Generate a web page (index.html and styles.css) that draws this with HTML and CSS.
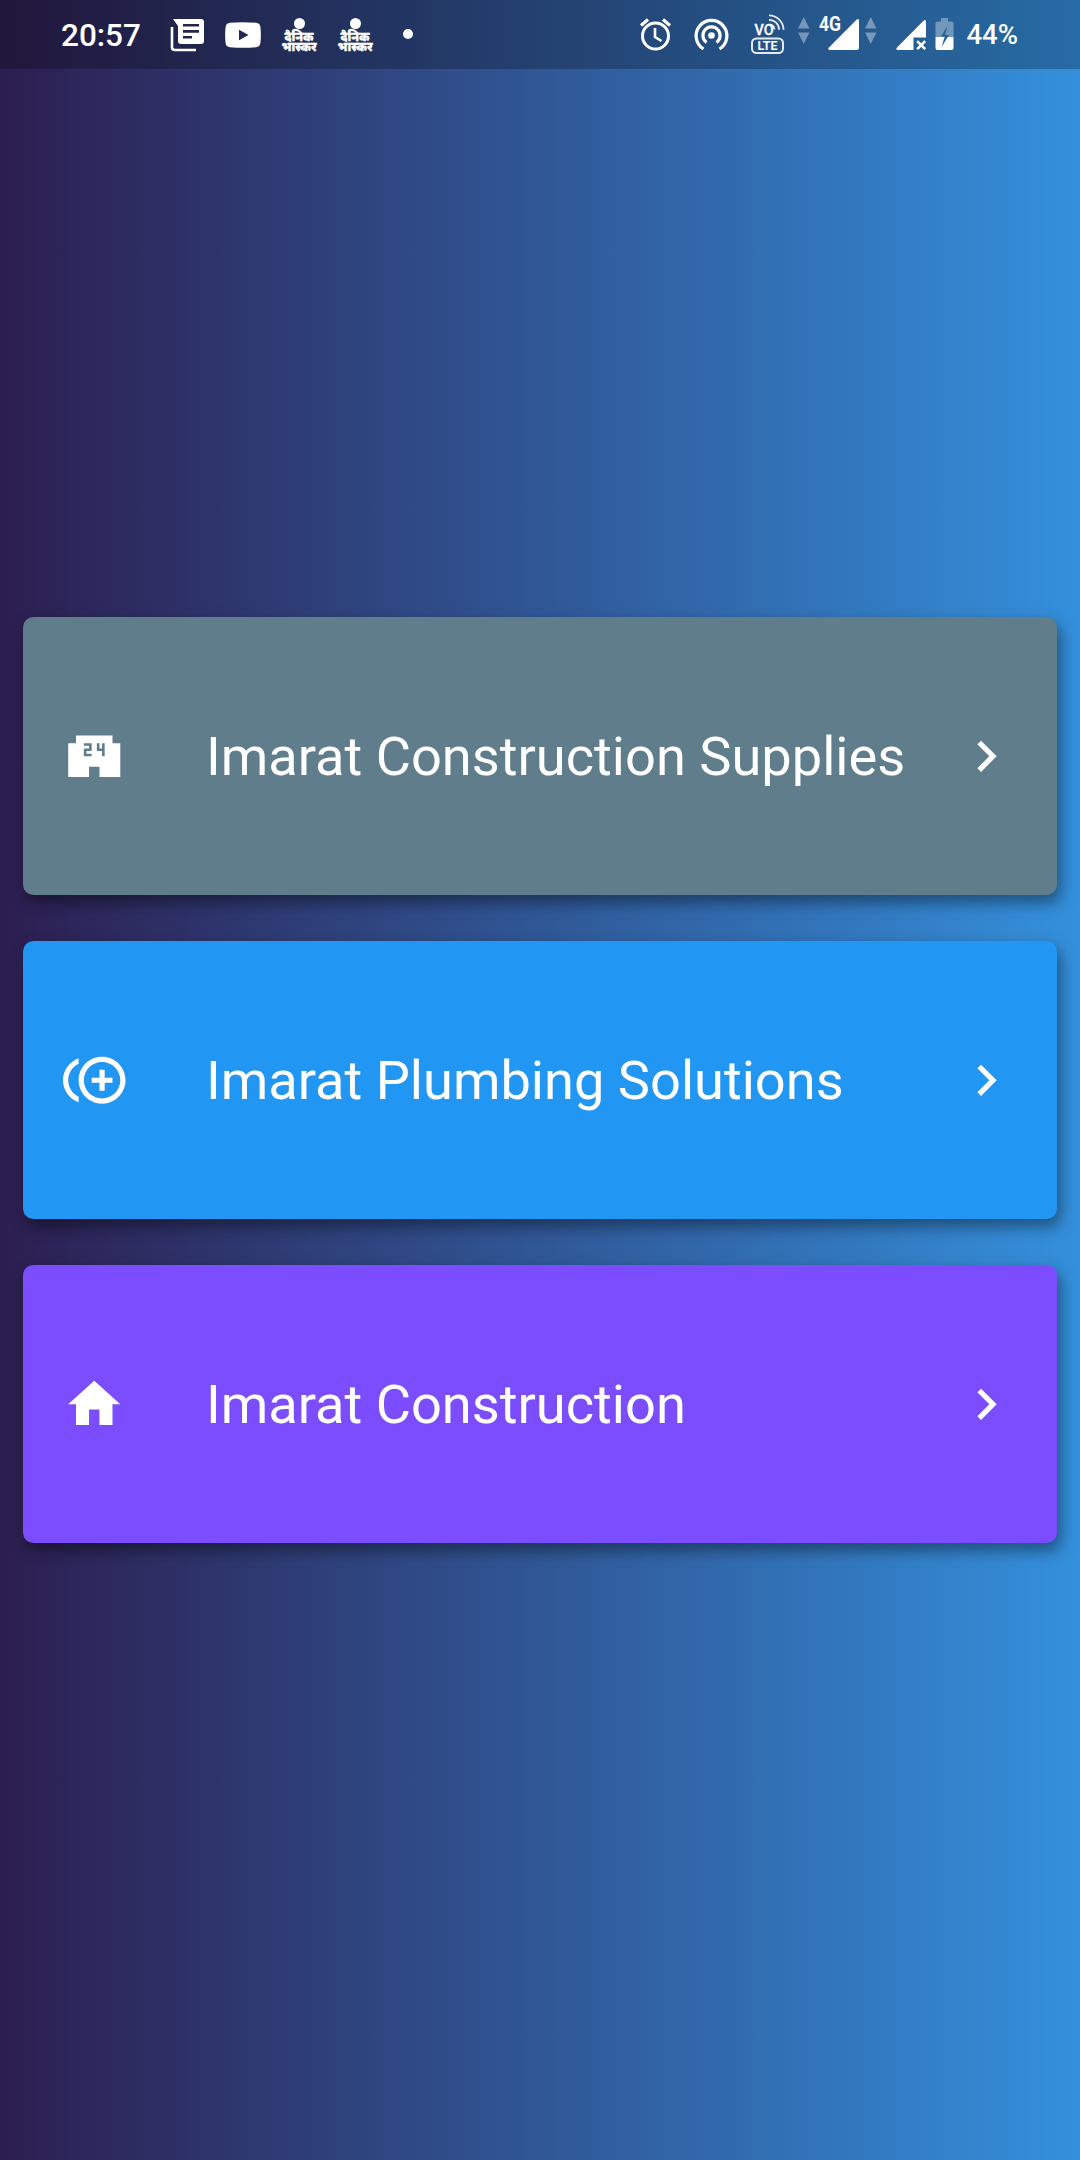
FILE: index.html
```html
<!DOCTYPE html>
<html lang="en">
<head>
<meta charset="utf-8">
<title>Imarat</title>
<link rel="stylesheet" href="styles.css">
</head>
<body>
<div class="screen">
  <header class="status">
    <div class="status-left">
      <span class="clock">20:57</span>
      <svg class="news" width="32" height="32" viewBox="0 0 32 32"><path d="M1 8v20q0 3 3 3h21" fill="none" stroke="#fff" stroke-width="2.6"/><path fill="#fff" fill-rule="evenodd" d="M2 0h28q3 0 3 3v19q0 3-3 3H10q-3 0-3-3V7zM12 5v2.6h16V5zM12 11v2.800h16V11zM12 17v2.600h9V17z"/></svg>
      <svg class="video" width="36" height="26" viewBox="0 0 36 26"><path fill="#fff" fill-rule="evenodd" d="M5 .8Q18-.5 31 .8q4 .4 4.400 4.200.9 8 0 16-.4 3.800-4.400 4.200-13 1.300-26 0Q1 24.800.6 21q-.9-8 0-16Q1 1.200 5 .8zM14 7.800v10.400L23.500 13z"/></svg>
      <span class="paper"><i class="sun"></i><b class="masthead">दैनिक<br>भास्कर</b></span>
      <span class="paper"><i class="sun"></i><b class="masthead">दैनिक<br>भास्कर</b></span>
      <i class="dot"></i>
    </div>
    <div class="status-right">
      <svg class="alarm" width="32" height="34" viewBox="0 0 32 34" fill="none" stroke="#fff"><circle cx="15.500" cy="18" r="13" stroke-width="3"/><path d="M1 7.500l7-6M30 7.500l-7-6" stroke-width="3.200"/><path d="M15 10v9l6.500 4" stroke-width="2.600"/></svg>
      <svg class="hotspot" width="36" height="34" viewBox="0 0 36 34" fill="none" stroke="#fff" stroke-width="3.200"><circle cx="17.500" cy="17.500" r="3.300" fill="#fff" stroke="none"/><path d="M12.500 24.500a8.600 8.600 0 1 1 10 0M9.500 31a15.400 15.400 0 1 1 16 0"/></svg>
      <svg class="volte" width="36" height="42" viewBox="0 0 36 42"><text x="3.500" y="22.300" class="vo" textLength="19" lengthAdjust="spacingAndGlyphs">VO</text><g fill="none" stroke="#fff" stroke-width="1.800" opacity=".88"><path d="M18.500 11.500a5.500 5.500 0 0 1 5 5M18 7a9.500 9.500 0 0 1 10 9.800M18 2.300a14.500 14.500 0 0 1 14.500 14.500"/><rect x="1" y="25.500" width="31" height="14.500" rx="4.500" stroke-width="2"/></g><text x="6.500" y="37.300" class="lte" textLength="20" lengthAdjust="spacingAndGlyphs">LTE</text></svg>
      <svg class="arrows first" width="12" height="28" viewBox="0 0 12 28"><path d="M0 11.500h11.500L5.700 0zM0 15.500h11.500L5.700 27z"/></svg>
      <svg class="signal" width="42" height="36" viewBox="0 0 42 36"><path fill="#fff" d="M11 35q-3-.5-.8-2.800L37.500 4.800Q39.500 3 40 5v28q0 2-2 2z"/><text x="0" y="16.200" class="net" textLength="22" lengthAdjust="spacingAndGlyphs">4G</text></svg>
      <svg class="arrows second" width="12" height="28" viewBox="0 0 12 28"><path d="M0 11.500h11.500L5.700 0zM0 15.500h11.500L5.700 27z"/></svg>
      <svg class="nosim" width="31" height="31" viewBox="0 0 31 31"><path fill="#fff" d="M2 30q-3-.5-.8-2.800L27.500.8Q29.500-1 30 1v16.500H17.500V30z"/><path d="M21.200 21.200l8 8m0-8l-8 8" stroke="#fff" stroke-width="2.600"/></svg>
      <svg class="battery" width="19" height="32" viewBox="0 0 19 32"><path fill="#fff" opacity=".35" d="M6 0h7v3.500h3.500q2 0 2 2V19H.5V5.500q0-2 2-2H6z"/><path fill="#fff" d="M.5 19h18v11q0 2-2 2h-14q-2 0-2-2z"/><path fill="#266196" d="M12.500 8L6 18.500h3.800L6.500 29 14 17h-4z"/></svg>
      <span class="percent">44%</span>
    </div>
  </header>
  <main class="menu">
    <a class="card supplies">
      <svg class="icon" viewBox="0 0 24 24"><path d="M19 7V4H5v3H2v13h8v-4h4v4h8V7h-3zm-8 3H9v1h2v1H8V9h2V8H8V7h3v3zm5 2h-1v-2h-2V7h1v2h1V7h1v5z"/></svg>
      <span class="label">Imarat Construction Supplies</span>
      <svg class="icon" viewBox="0 0 24 24"><path d="M10 6L8.590 7.410 13.170 12l-4.580 4.590L10 18l6-6z"/></svg>
    </a>
    <a class="card plumbing">
      <svg class="icon" viewBox="0 0 24 24"><path d="M16 8h-2v3h-3v2h3v3h2v-3h3v-2h-3zM2 12c0-2.790 1.640-5.200 4.010-6.320V3.520C2.520 4.760 0 8.090 0 12s2.520 7.240 6.010 8.480v-2.160C3.640 17.200 2 14.790 2 12zm13-9c-4.960 0-9 4.040-9 9s4.040 9 9 9 9-4.040 9-9-4.040-9-9-9zm0 16c-3.860 0-7-3.140-7-7s3.140-7 7-7 7 3.140 7 7-3.140 7-7 7z"/></svg>
      <span class="label">Imarat Plumbing Solutions</span>
      <svg class="icon" viewBox="0 0 24 24"><path d="M10 6L8.590 7.410 13.170 12l-4.580 4.590L10 18l6-6z"/></svg>
    </a>
    <a class="card construction">
      <svg class="icon" viewBox="0 0 24 24"><path d="M10 20v-6h4v6h5v-8h3L12 3 2 12h3v8z"/></svg>
      <span class="label">Imarat Construction</span>
      <svg class="icon" viewBox="0 0 24 24"><path d="M10 6L8.590 7.410 13.170 12l-4.580 4.590L10 18l6-6z"/></svg>
    </a>
  </main>
</div>
</body>
</html>
```
FILE: styles.css
```css
* { box-sizing: border-box; }
body { margin: 0; font-family: Roboto, "Noto Sans", sans-serif; color: #fff; }
svg { display: block; flex: none; overflow: visible; }

.screen {
  width: 1080px;
  height: 2160px;
  display: flex;
  flex-direction: column;
  background: linear-gradient(90deg, #2c1e50 0%, #3490dc 100%);
}

/* status bar */
.status {
  height: 69px;
  display: flex;
  justify-content: space-between;
  padding: 0 62px 0 61px;
  background: rgba(0, 0, 0, .25);
}
.status-left, .status-right { display: flex; align-items: flex-start; }
.clock { font-size: 31.500px; font-weight: 500; line-height: 37px; margin-top: 17px; width: 80px; white-space: nowrap; }
.news { margin: 19px 0 0 30px; }
.video { margin: 22px 0 0 22px; }
.paper { width: 36px; margin: 18px 0 0 20px; display: flex; flex-direction: column; align-items: center; }
.sun { width: 11px; height: 11px; border-radius: 50%; background: #fff; }
.masthead {
  margin-top: 4px;
  font-family: "Noto Sans Devanagari", "Noto Sans", sans-serif;
  font-weight: 900;
  font-size: 12px;
  line-height: 10px;
  text-align: center;
  -webkit-text-stroke: .3px #fff;
}
.dot { width: 10px; height: 10px; border-radius: 50%; background: #fff; margin: 29px 0 0 30px; }

.alarm { margin-top: 18px; }
.hotspot { margin: 18px 0 0 22px; }
.volte { margin: 13px 0 0 21px; }
.vo { font: 500 15.500px Roboto, sans-serif; fill: #fff; stroke: #fff; stroke-width: .3px; }
.lte { font: 700 12.500px Roboto, sans-serif; fill: #fff; }
.arrows { fill: #fff; opacity: .38; margin-top: 17px; }
.first { margin-left: 11px; }
.signal { margin: 15px 0 0 9px; }
.net { font: 700 20.500px Roboto, sans-serif; fill: #fff; }
.second { margin-left: 4px; }
.nosim { margin: 20px 0 0 19px; }
.battery { margin: 18px 0 0 8px; }
.percent { font-size: 27.500px; font-weight: 500; line-height: 32px; margin: 19px 0 0 12px; }

/* menu cards */
.menu {
  flex: 1;
  display: flex;
  flex-direction: column;
  gap: 46px;
  padding: 548px 23px 0;
}
.card {
  height: 278px;
  display: flex;
  align-items: center;
  padding: 1px 40px 0;
  border-radius: 10.500px;
  box-shadow: 4px 8px 12px rgba(0, 0, 0, .2), 3px 7px 18px rgba(0, 0, 0, .24);
}
.supplies { background: #607d8b; }
.plumbing { background: #2196f3; }
.construction { background: #7c4dff; }
.icon { width: 62.500px; height: 62.500px; fill: #fff; }
.label { flex: 1; margin-left: 80.500px; padding-top: 1px; font-size: 54.200px; line-height: 62px; white-space: nowrap; }
```
